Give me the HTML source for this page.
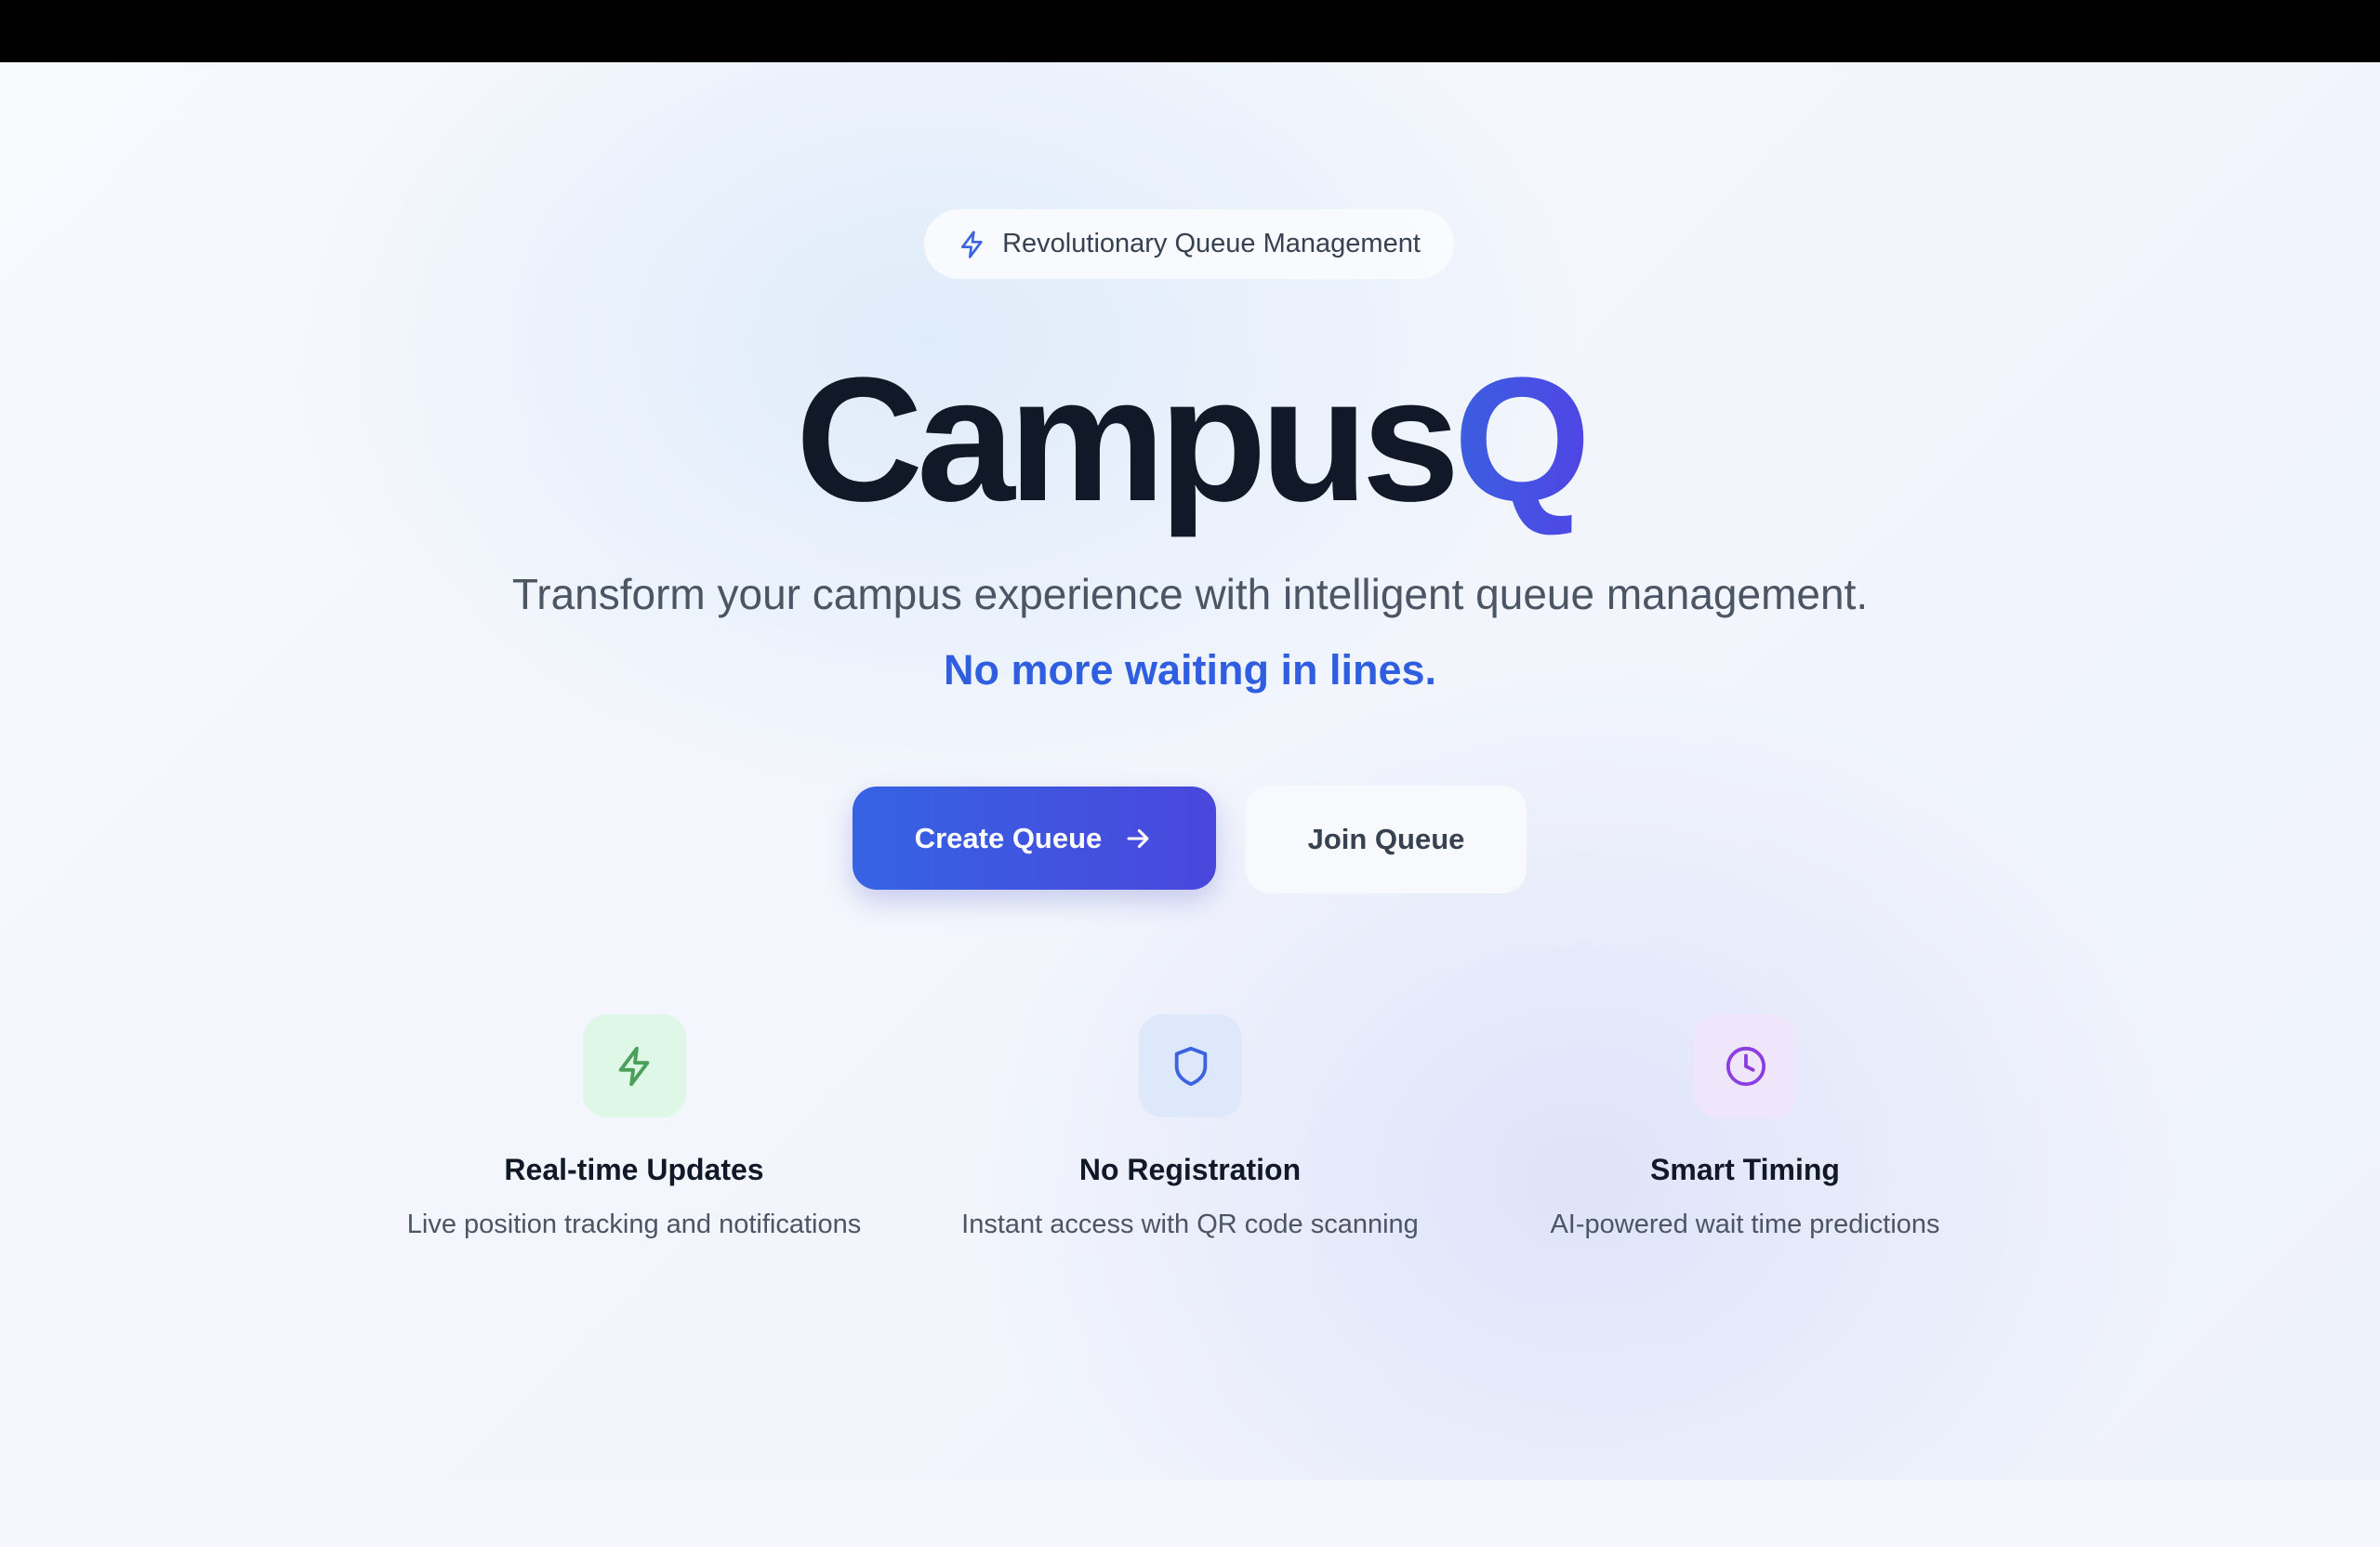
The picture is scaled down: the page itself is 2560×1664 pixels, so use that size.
<!DOCTYPE html>
<html><head><meta charset="utf-8"><style>
*{margin:0;padding:0;box-sizing:border-box}
body{width:2560px;height:1664px;overflow:hidden;font-family:"Liberation Sans",sans-serif;background:#f6f8fc;position:relative}
.top{position:absolute;left:0;top:0;width:2560px;height:67px;background:#000}
.main{position:absolute;left:0;top:67px;width:2560px;height:1525px;
background:radial-gradient(ellipse 700px 500px at 1000px 300px,rgba(220,234,250,.9),rgba(220,234,250,0)),
radial-gradient(ellipse 650px 550px at 1700px 1200px,rgba(222,226,250,.95),rgba(222,226,250,0)),
linear-gradient(135deg,#f7f9fd,#eef2fb);}
.bottom{position:absolute;left:0;top:1592px;width:2560px;height:72px;background:#f5f7fc}
.c{position:absolute;left:0;width:2560px;text-align:center}
.badge{position:absolute;left:994px;top:225px;width:570px;height:75px;border-radius:38px;background:rgba(250,251,254,.92);display:flex;align-items:center;justify-content:center;gap:16px;font-size:29px;color:#374151}
.title{top:378px;font-size:190px;font-weight:bold;letter-spacing:-7px;color:#111827;line-height:1}
.title span{background:linear-gradient(90deg,#3a5fe0,#4f46e5);-webkit-background-clip:text;color:transparent}
.sub{top:612px;font-size:46px;color:#4b5563}
.blue{top:695px;font-size:45px;font-weight:bold;color:#2f5fe0}
.btn{position:absolute;display:flex;align-items:center;justify-content:center;font-size:31px;font-weight:bold;border-radius:26px}
.b1{left:917px;top:846px;width:391px;height:111px;background:linear-gradient(90deg,#3563e3,#4a47dc);color:#fff;box-shadow:0 12px 28px rgba(70,80,200,.25);gap:22px}
.b2{left:1340px;top:845px;width:302px;height:116px;background:#f8f9fd;color:#374151}
.ic{position:absolute;top:1091px;width:111px;height:111px;border-radius:26px;display:flex;align-items:center;justify-content:center}
.ft{position:absolute;width:600px;text-align:center}
.ft h3{font-size:32px;color:#111827;font-weight:bold;margin-top:1240px}
.ft p{font-size:29px;color:#4b5563;margin-top:24px}
</style></head><body>
<div class="top"></div>
<div class="main"></div>
<div class="bottom"></div>
<div class="badge"><svg width="32" height="32" viewBox="0 0 24 24" fill="none" stroke="#3b63e0" stroke-width="2" stroke-linejoin="round"><path d="M13 2L4 14h7l-1 8 9-12h-7z"/></svg>Revolutionary Queue Management</div>
<div class="c title">Campus<span>Q</span></div>
<div class="c sub">Transform your campus experience with intelligent queue management.</div>
<div class="c blue">No more waiting in lines.</div>
<div class="btn b1">Create Queue <svg width="34" height="34" viewBox="0 0 24 24" fill="none" stroke="#fff" stroke-width="2.2" stroke-linecap="round" stroke-linejoin="round"><path d="M5 12h14M13 6l6 6-6 6"/></svg></div>
<div class="btn b2">Join Queue</div>
<div class="ic" style="left:627px;background:#dff7e6"><svg width="46" height="46" viewBox="0 0 24 24" fill="none" stroke="#4a9f5a" stroke-width="2" stroke-linejoin="round"><path d="M13 2L4 14h7l-1 8 9-12h-7z"/></svg></div>
<div class="ic" style="left:1225px;background:#dde8fa"><svg width="46" height="46" viewBox="0 0 24 24" fill="none" stroke="#3b63e0" stroke-width="2" stroke-linejoin="round"><path d="M12 2l8 3v7c0 5-3.5 8-8 10-4.5-2-8-5-8-10V5z"/></svg></div>
<div class="ic" style="left:1822px;background:#f0e6fc"><svg width="46" height="46" viewBox="0 0 24 24" fill="none" stroke="#8b3fe0" stroke-width="2" stroke-linecap="round"><circle cx="12" cy="12" r="10"/><path d="M12 6v6l4 2"/></svg></div>
<div class="ft" style="left:382px;top:0"><h3>Real-time Updates</h3><p>Live position tracking and notifications</p></div>
<div class="ft" style="left:980px;top:0"><h3>No Registration</h3><p>Instant access with QR code scanning</p></div>
<div class="ft" style="left:1577px;top:0"><h3>Smart Timing</h3><p>AI-powered wait time predictions</p></div>
</body></html>
